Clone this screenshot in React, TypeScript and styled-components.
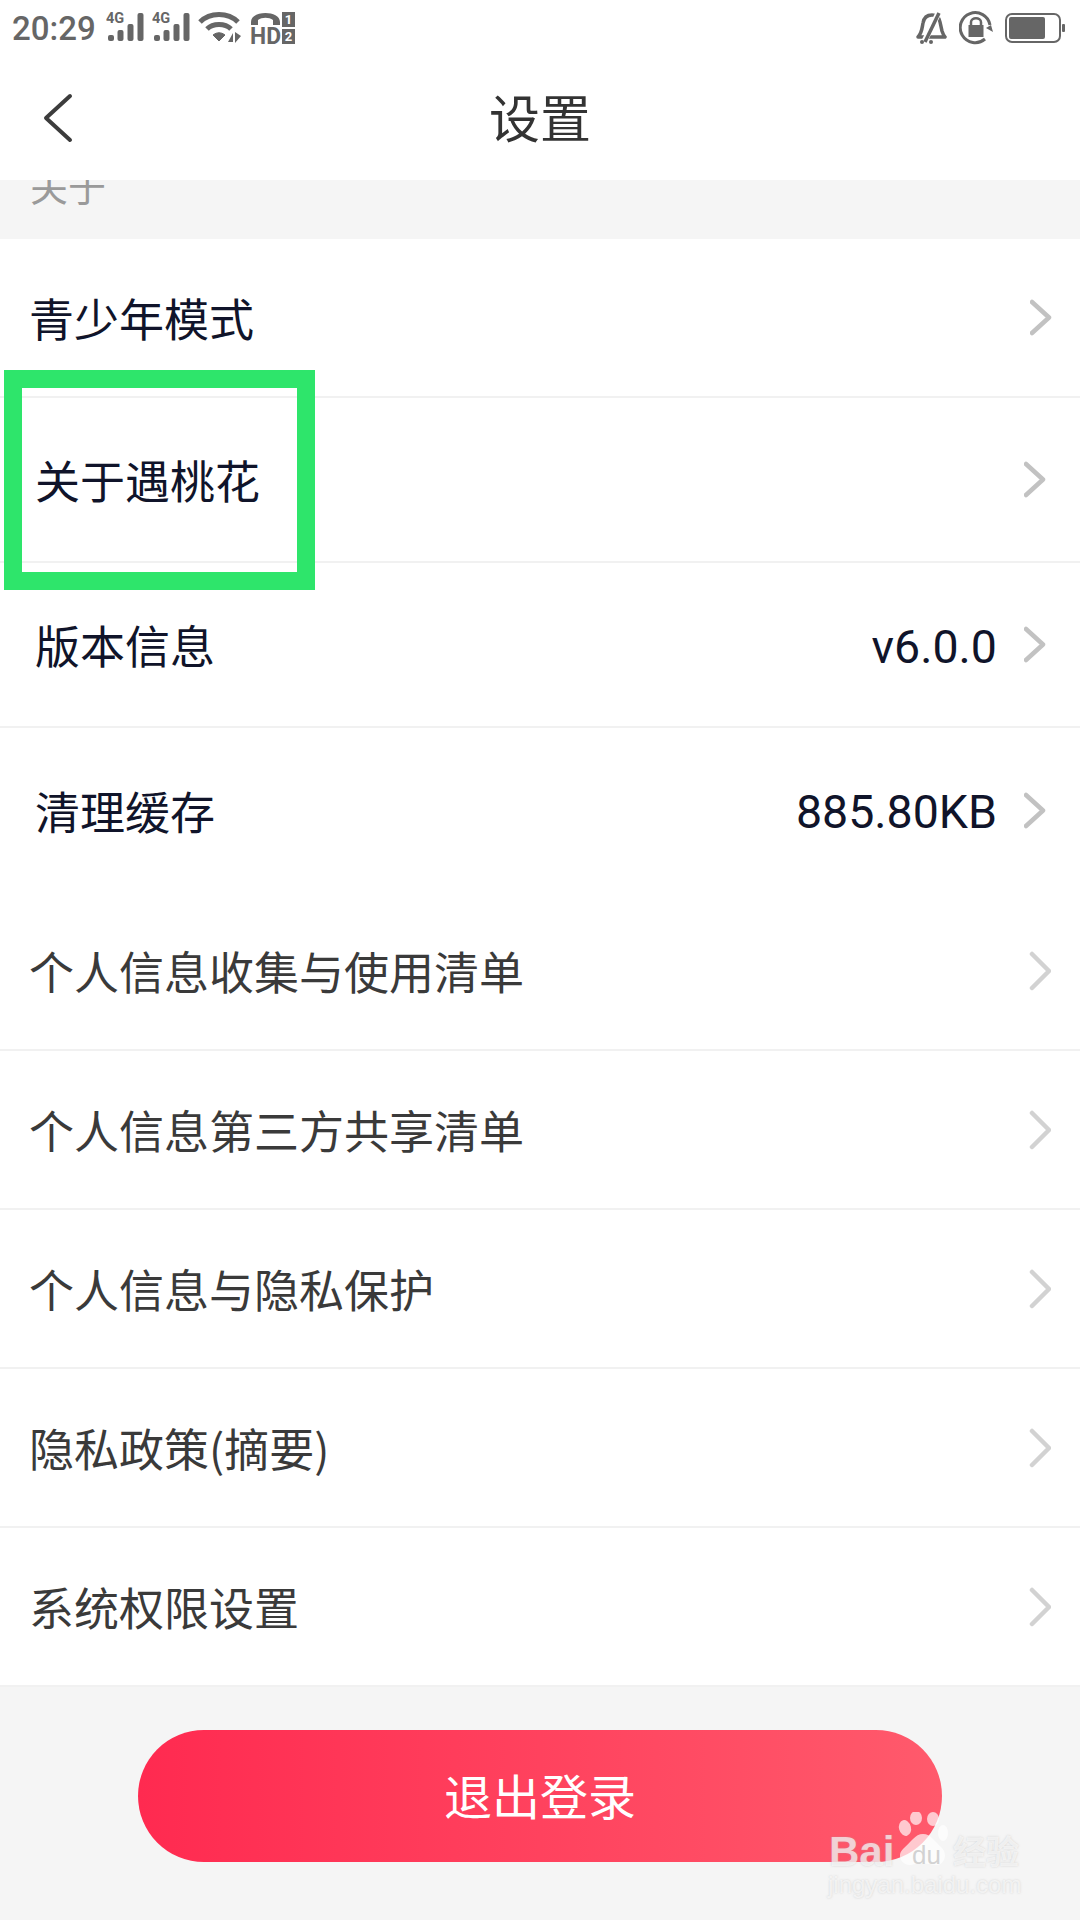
import styled, { createGlobalStyle } from "styled-components";

const GlobalStyle = createGlobalStyle`
  html, body {
    margin: 0;
    padding: 0;
    background: #ffffff;
  }
  * {
    box-sizing: border-box;
  }
`;

const CJK = `"Noto Sans CJK SC", "Noto Sans", sans-serif`;

const Page = styled.div`
  position: relative;
  width: 1080px;
  height: 1920px;
  overflow: hidden;
  display: flex;
  flex-direction: column;
  background: #f5f5f5;
  font-family: ${CJK};
`;

const StatusBar = styled.div`
  height: 60px;
  padding: 0 14px 0 12px;
  display: flex;
  align-items: center;
  background: #ffffff;
  color: #666666;
`;

const Time = styled.span`
  font-family: Roboto, sans-serif;
  font-size: 33px;
  font-weight: 500;
  margin-right: 10px;
  margin-top: -4px;
`;

const StatusGroup = styled.div`
  display: flex;
  align-items: center;
  gap: 6px;
  margin-top: -4px;
`;

const StatusRight = styled(StatusGroup)`
  margin-left: auto;
  gap: 12px;
`;

const Header = styled.header`
  position: relative;
  height: 120px;
  display: flex;
  align-items: center;
  justify-content: center;
  background: #ffffff;
`;

const Title = styled.h1`
  margin: 0 0 8px;
  font-size: 51px;
  font-weight: 400;
  color: #333333;
`;

const BackButton = styled.div`
  position: absolute;
  left: 42px;
  top: 33px;
  line-height: 0;
`;

const SectionLabel = styled.div`
  height: 59px;
  padding-left: 30px;
  overflow: hidden;
  font-size: 38px;
  line-height: 50px;
  color: #9a9a9a;

  span {
    display: block;
    margin-top: -20px;
  }
`;

const List = styled.div`
  background: #ffffff;
`;

const Row = styled.div<{ $h: number; $inset: number; $tone: "dark" | "soft"; $plain?: boolean }>`
  height: ${(p) => p.$h}px;
  padding: 0 ${(p) => (p.$tone === "soft" ? 29 : p.$inset - 1)}px 0 ${(p) => p.$inset}px;
  display: flex;
  align-items: center;
  border-bottom: ${(p) => (p.$plain ? "none" : "2px solid #f1f1f1")};
  font-size: 45px;
  color: ${(p) => (p.$tone === "dark" ? "#10142a" : "#3a3a3a")};
`;

const RowLabel = styled.span`
  flex: 1;
`;

const RowValue = styled.span`
  font-family: Roboto, sans-serif;
  font-size: 46.5px;
  margin-right: 27px;
  margin-top: 4px;
`;

const Footer = styled.div`
  flex: 1;
  padding-top: 43px;
  display: flex;
  justify-content: center;
  align-items: flex-start;
`;

const LogoutButton = styled.button`
  width: 804px;
  height: 132px;
  padding: 0 0 4px;
  border: none;
  border-radius: 66px;
  background: linear-gradient(90deg, #ff2a50 0%, #ff5a6c 100%);
  color: #ffffff;
  font-family: ${CJK};
  font-size: 48px;
`;

const Highlight = styled.div`
  position: absolute;
  left: 4px;
  top: 370px;
  width: 311px;
  height: 220px;
  border: 18px solid #2ee56b;
`;

const Watermark = styled.div`
  position: absolute;
  left: 826px;
  top: 1800px;
  width: 200px;
  height: 100px;
  color: rgba(255, 255, 255, 0.68);
  text-shadow: 0 0 2px rgba(170, 170, 170, 0.5);
`;

const Paw = styled.svg`
  position: absolute;
  left: 71px;
  top: 12px;
`;

const MarkBai = styled.span`
  position: absolute;
  left: 3px;
  top: 28px;
  font-family: "Liberation Sans", sans-serif;
  font-size: 42px;
  font-weight: 700;
  line-height: 48px;
`;

const MarkDu = styled.span`
  position: absolute;
  left: 86px;
  top: 40px;
  font-family: "Liberation Sans", sans-serif;
  font-size: 26px;
  line-height: 30px;
  color: rgba(205, 205, 205, 0.9);
  text-shadow: none;
`;

const MarkJingyan = styled.span`
  position: absolute;
  left: 127px;
  top: 30px;
  font-size: 33px;
  font-weight: 700;
  line-height: 40px;
`;

const MarkSite = styled.span`
  position: absolute;
  left: 2px;
  top: 71px;
  font-family: "Liberation Sans", sans-serif;
  font-size: 24px;
  line-height: 28px;
  white-space: nowrap;
`;

const SignalIcon = () => (
  <svg width="40" height="44" viewBox="0 -7 40 44" fill="#666666">
    <text x="0" y="10" fontFamily="Roboto, sans-serif" fontSize="14.5" fontWeight="700">
      4G
    </text>
    <rect x="2" y="22" width="6" height="6" rx="2" />
    <rect x="11.5" y="17" width="6" height="11" rx="2" />
    <rect x="21.5" y="11" width="6" height="17" rx="2" />
    <rect x="31.5" y="0" width="6" height="28" rx="2" />
  </svg>
);

const WifiIcon = () => (
  <svg width="46" height="32" viewBox="0 0 46 32" fill="none" stroke="#666666">
    <path d="M2 10C12 0 30 0 40 10" strokeWidth="5" />
    <path d="M9 17C15 11 27 11 33 17" strokeWidth="5" />
    <path d="M15 23L21 29L27 23C23 20 19 20 15 23Z" fill="#666666" strokeWidth="1" />
    <path d="M30 30L35 21V30ZM37 20V31L43 24Z" fill="#666666" stroke="none" />
  </svg>
);

const HdIcon = () => (
  <svg width="46" height="44" viewBox="0 -5 46 44" fill="#666666">
    <path d="M1 11C1 -1 30 -1 30 11V14H23V9C19 6 12 6 8 9V14H1Z" />
    <text x="0" y="33" fontFamily="Roboto, sans-serif" fontSize="24" fontWeight="700" textLength="31" lengthAdjust="spacingAndGlyphs">
      HD
    </text>
    <rect x="32" y="1" width="13" height="15" />
    <rect x="32" y="18" width="13" height="15" />
    <text x="38.5" y="13" fill="#ffffff" textAnchor="middle" fontFamily="Roboto, sans-serif" fontSize="13" fontWeight="700">
      1
    </text>
    <text x="38.5" y="30" fill="#ffffff" textAnchor="middle" fontFamily="Roboto, sans-serif" fontSize="13" fontWeight="700">
      2
    </text>
  </svg>
);

const BellOffIcon = () => (
  <svg width="32" height="34" viewBox="0 0 32 34" fill="none" stroke="#666666" strokeWidth="3.5">
    <path d="M3 26C7 22 7 17 8 12C9 6 13 4 17 4C21 4 24 6 25 11L27 20C28 23 29 25 30 26Z" strokeLinejoin="round" />
    <path d="M9 31L24 1" stroke="#ffffff" strokeWidth="6" />
    <path d="M10 31L24 2" />
    <circle cx="7" cy="31" r="2" fill="#666666" stroke="none" />
    <circle cx="16" cy="31" r="2" fill="#666666" stroke="none" />
  </svg>
);

const RotationLockIcon = () => (
  <svg width="34" height="34" viewBox="0 0 34 34" fill="none" stroke="#666666" strokeWidth="3">
    <path d="M26 28A15 15 0 1 1 31 14" />
    <path d="M27 17L32 14L34 21Z" fill="#666666" stroke="none" />
    <path d="M12 15V11C12 6 22 6 22 11V15" strokeWidth="2.5" />
    <rect x="9.5" y="14" width="15" height="12" fill="#666666" stroke="none" />
  </svg>
);

const BatteryIcon = () => (
  <svg width="61" height="30" viewBox="0 0 61 30" fill="none">
    <rect x="1" y="1" width="54" height="28" rx="6" stroke="#666666" strokeWidth="2" />
    <rect x="4" y="4" width="36" height="22" rx="2" fill="#666666" />
    <rect x="57" y="11" width="3" height="8" rx="1" fill="#666666" />
  </svg>
);

const BackIcon = () => (
  <svg width="32" height="50" viewBox="0 0 32 50" fill="none" stroke="#3c3c3c" strokeWidth="4" strokeLinecap="round" strokeLinejoin="round">
    <path d="M28 3L4 25L28 47" />
  </svg>
);

const Chevron = ({ soft }: { soft?: boolean }) => (
  <svg
    width="22"
    height={soft ? 40 : 37}
    viewBox={soft ? "0 0 22 40" : "0 0 22 37"}
    fill="none"
    stroke={soft ? "#d2d2d2" : "#c2c2c2"}
    strokeWidth="4.5"
    strokeLinecap="round"
    strokeLinejoin="round"
  >
    {soft ? <path d="M3 3L20 20L3 37" /> : <path d="M2 3L19 18.5L2 34" />}
  </svg>
);

const rows: { label: string; value?: string; h: number; inset: number; tone: "dark" | "soft"; plain?: boolean }[] = [
  { label: "青少年模式", h: 159, inset: 29, tone: "dark" },
  { label: "关于遇桃花", h: 165, inset: 35, tone: "dark" },
  { label: "版本信息", value: "v6.0.0", h: 165, inset: 35, tone: "dark" },
  { label: "清理缓存", value: "885.80KB", h: 164, inset: 35, tone: "dark", plain: true },
  { label: "个人信息收集与使用清单", h: 159, inset: 29, tone: "soft" },
  { label: "个人信息第三方共享清单", h: 159, inset: 29, tone: "soft" },
  { label: "个人信息与隐私保护", h: 159, inset: 29, tone: "soft" },
  { label: "隐私政策(摘要)", h: 159, inset: 29, tone: "soft" },
  { label: "系统权限设置", h: 159, inset: 29, tone: "soft" },
];

export default function App() {
  return (
    <Page>
      <GlobalStyle />
      <StatusBar>
        <Time>20:29</Time>
        <StatusGroup>
          <SignalIcon />
          <SignalIcon />
          <WifiIcon />
          <HdIcon />
        </StatusGroup>
        <StatusRight>
          <BellOffIcon />
          <RotationLockIcon />
          <BatteryIcon />
        </StatusRight>
      </StatusBar>
      <Header>
        <BackButton>
          <BackIcon />
        </BackButton>
        <Title>设置</Title>
      </Header>
      <SectionLabel>
        <span>关于</span>
      </SectionLabel>
      <List>
        {rows.map((r) => (
          <Row key={r.label} $h={r.h} $inset={r.inset} $tone={r.tone} $plain={r.plain}>
            <RowLabel>{r.label}</RowLabel>
            {r.value && <RowValue>{r.value}</RowValue>}
            <Chevron soft={r.tone === "soft"} />
          </Row>
        ))}
      </List>
      <Footer>
        <LogoutButton>退出登录</LogoutButton>
      </Footer>
      <Highlight />
      <Watermark>
        <Paw width="52" height="56" viewBox="0 0 52 56" fill="rgba(255,255,255,0.68)">
          <ellipse cx="8" cy="16" rx="6" ry="8" transform="rotate(-15 8 16)" />
          <ellipse cx="19" cy="6" rx="6" ry="7" />
          <ellipse cx="36" cy="7" rx="6" ry="7" />
          <ellipse cx="46" cy="21" rx="5" ry="8" />
          <path d="M26 22C34 22 38 30 44 35C52 42 47 54 38 53C32 52 24 50 14 53C5 54 -1 44 6 37C14 30 18 22 26 22Z" />
        </Paw>
        <MarkBai>Bai</MarkBai>
        <MarkDu>du</MarkDu>
        <MarkJingyan>经验</MarkJingyan>
        <MarkSite>jingyan.baidu.com</MarkSite>
      </Watermark>
    </Page>
  );
}
